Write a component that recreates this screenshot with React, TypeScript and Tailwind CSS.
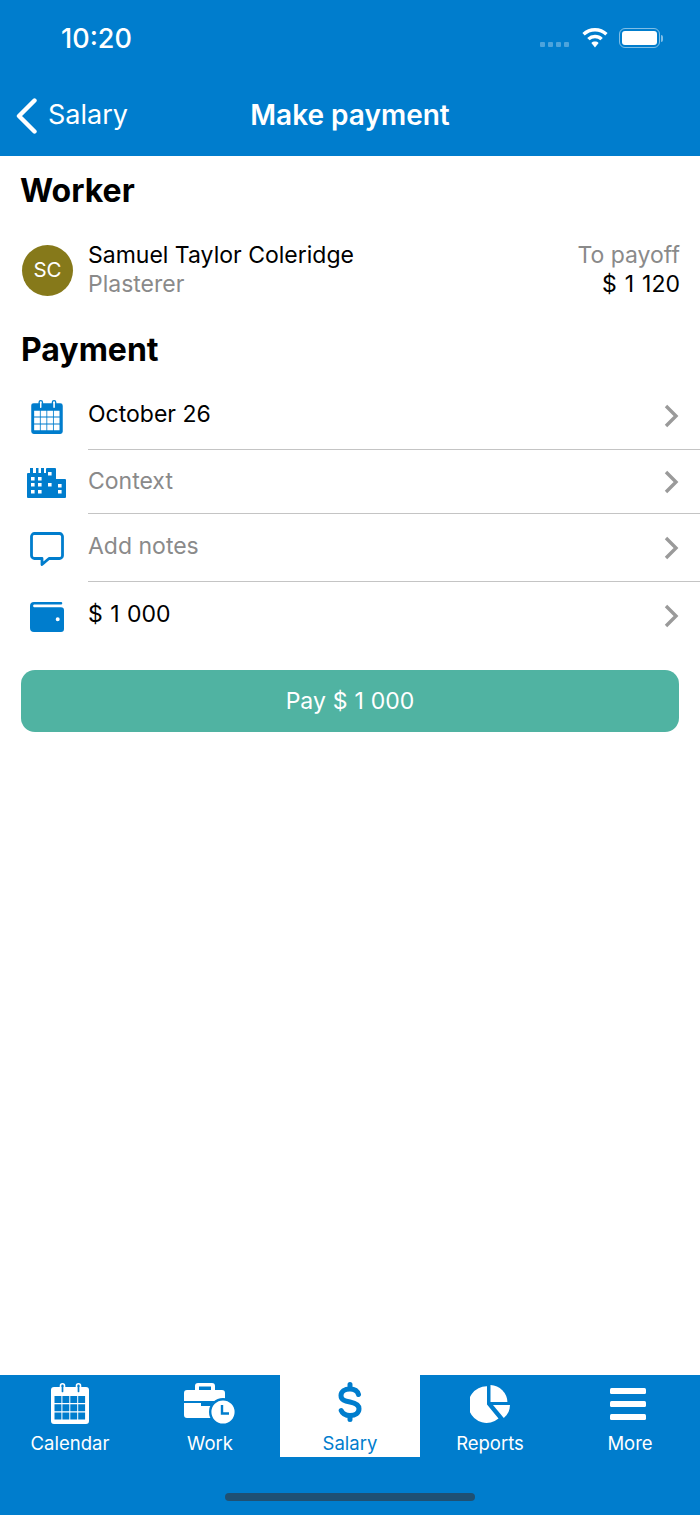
const BLUE = "#007dcd";

function CalendarIcon({ className }: { className?: string }) {
    // cut-outs are drawn with evenodd so the background shows through the grid
    const cells: string[] = [];
    for (let r = 0; r < 3; r++) {
        for (let c = 0; c < 4; c++) {
            cells.push(`M${3.5 + c * 7.9} ${13 + r * 8.2}h6.9v7h-6.9z`);
        }
    }
    return (
        <svg viewBox="0 0 38 41" className={className} fill="currentColor">
            <path
                fillRule="evenodd"
                d={`M3 4h32a3 3 0 0 1 3 3v31a3 3 0 0 1-3 3H3a3 3 0 0 1-3-3V7a3 3 0 0 1 3-3z M10.500 4h2v5.500h-2z M26.500 4h2v5.500h-2z ${cells.join(" ")}`}
            />
            <rect x="9.500" y="0.800" width="4" height="9.500" rx="2" fill="none" stroke="currentColor" strokeWidth="1.600" />
            <rect x="25.500" y="0.800" width="4" height="9.500" rx="2" fill="none" stroke="currentColor" strokeWidth="1.600" />
        </svg>
    );
}

function BuildingsIcon({ className }: { className?: string }) {
    const holes = [
        [4, 9], [11, 9], [4, 15], [11, 15], [4, 22], [11, 22], [21, 4], [21, 15], [31, 16], [31, 22],
    ];
    return (
        <svg viewBox="0 0 39 30" className={className} fill="currentColor">
            <path
                fillRule="evenodd"
                d={`M1 5h2V0h3v5h3V0h2.500v5H14V0h3v5h2V1a1 1 0 0 1 1-1h8a1 1 0 0 1 1 1v10h9a1 1 0 0 1 1 1v17a1 1 0 0 1-1 1H1a1 1 0 0 1-1-1V6a1 1 0 0 1 1-1z ${holes
                    .map(([x, y]) => `M${x} ${y}h3.600v3.600h-3.600z`)
                    .join(" ")}`}
            />
        </svg>
    );
}

function CommentIcon({ className }: { className?: string }) {
    return (
        <svg viewBox="0 0 34 35" className={className} fill="none" stroke="currentColor" strokeWidth="2.800" strokeLinejoin="round">
            <path d="M4.500 1.500h25a3 3 0 0 1 3 3v19a3 3 0 0 1-3 3H19l-7 6v-6H4.500a3 3 0 0 1-3-3v-19a3 3 0 0 1 3-3z" />
        </svg>
    );
}

function WalletIcon({ className }: { className?: string }) {
    return (
        <svg viewBox="0 0 34 30" className={className} fill="currentColor">
            <path
                fillRule="evenodd"
                d="M4 0h27a1.300 1.300 0 0 1 0 2.600H4A1.400 1.400 0 0 0 4 5.200h27a3 3 0 0 1 3 3V27a3 3 0 0 1-3 3H4a4 4 0 0 1-4-4V4a4 4 0 0 1 4-4zM27.700 15.200a2 2 0 1 0 0 4 2 2 0 0 0 0-4z"
            />
        </svg>
    );
}

function BriefcaseClockIcon({ className }: { className?: string }) {
    return (
        <svg viewBox="0 0 52 41" className={className} fill="currentColor">
            <path
                fillRule="evenodd"
                d="M11 7V3a3 3 0 0 1 3-3h14a3 3 0 0 1 3 3v4h7a3 3 0 0 1 3 3v8H0v-8a3 3 0 0 1 3-3zM15 3.500V7h12V3.500z"
            />
            <path d="M0 20h17v3h11v-3h13v15H3a3 3 0 0 1-3-3z" />
            <circle cx="39" cy="29" r="12.800" stroke={BLUE} strokeWidth="2.400" />
            <path d="M38 22v8.500h7" fill="none" stroke={BLUE} strokeWidth="2.400" />
        </svg>
    );
}

function DollarIcon({ className }: { className?: string }) {
    return (
        <svg viewBox="0 0 24 40" className={className} fill="none" stroke="currentColor" strokeWidth="5" strokeLinecap="round">
            <path d="M12 2.500v4M12 33.500v4" />
            <path d="M20.500 12.500C19.500 9 16.500 7 12 7 6.500 7 3 9.800 3 13.500 3 18 7 19 12 20c5 1 9 2.300 9 6.800 0 4-3.500 6.700-9 6.700-4.500 0-7.500-1.800-8.800-5" />
        </svg>
    );
}

function PieIcon({ className }: { className?: string }) {
    return (
        <svg viewBox="0 0 40 38" className={className} fill="currentColor">
            <path d="M17 1.300V19.500l11.500 14A18.300 18.300 0 1 1 17 1.300z" />
            <path d="M20.500 0A17.500 17.500 0 0 1 37.400 17H20.500z" />
            <path d="M23 20h17a17 17 0 0 1-6.200 13z" />
        </svg>
    );
}

function MenuIcon({ className }: { className?: string }) {
    return (
        <svg viewBox="0 0 36 32" className={className} fill="currentColor">
            <rect x="0" y="0" width="36" height="6" rx="1.500" />
            <rect x="0" y="13" width="36" height="6" rx="1.500" />
            <rect x="0" y="26" width="36" height="6" rx="1.500" />
        </svg>
    );
}

function Chevron() {
    return (
        <svg viewBox="0 0 16 24" className="w-4 h-6 text-[#9a9a9a]" fill="none" stroke="currentColor" strokeWidth="3.400">
            <path d="M3 2l10 10-10 10" />
        </svg>
    );
}

function StatusBar() {
    return (
        <div className="h-[76px] flex items-center justify-between pl-[61px] pr-[37px]">
            <span className="text-[27px] font-medium text-white mt-[3px]">10:20</span>
            <div className="flex items-center">
                <div className="flex gap-[3px] mt-[13px] mr-[13px]">
                    <span className="w-[5px] h-[5px] rounded-[1px] bg-white/30" />
                    <span className="w-[5px] h-[5px] rounded-[1px] bg-white/30" />
                    <span className="w-[5px] h-[5px] rounded-[1px] bg-white/30" />
                    <span className="w-[5px] h-[5px] rounded-[1px] bg-white/30" />
                </div>
                <svg viewBox="0 0 26 20" className="w-[26px] h-[20px] text-white mr-[11px]" fill="currentColor">
                    <path d="M13 0c4.900 0 9.300 1.900 12.600 5.100l-2.300 2.400A14.800 14.800 0 0 0 13 3.400c-4 0-7.600 1.600-10.300 4.100L.4 5.100A18 18 0 0 1 13 0z" />
                    <path d="M13 6.800c3 0 5.700 1.200 7.800 3.100l-2.400 2.400A8 8 0 0 0 13 10.200a8 8 0 0 0-5.400 2.100L5.200 9.900A11.400 11.400 0 0 1 13 6.800z" />
                    <path d="M13 13.600c1.400 0 2.700.5 3.600 1.400L13 19.400 9.400 15c.9-.9 2.200-1.400 3.600-1.400z" />
                </svg>
                <div className="w-[41px] h-[20px] rounded-[6px] border-[1.5px] border-white/50 p-[2px]">
                    <div className="w-full h-full rounded-[3px] bg-white" />
                </div>
                <div className="w-[2px] h-[7px] rounded-r-[2px] bg-white/50 ml-[1px]" />
            </div>
        </div>
    );
}

function NavBar() {
    return (
        <div className="relative h-[80px] flex items-center justify-center">
            <div className="absolute left-[16px] top-[21px] flex items-center">
                <svg viewBox="0 0 22 36" className="w-[22px] h-[36px] text-white" fill="none" stroke="currentColor" strokeWidth="4.400" strokeLinecap="round" strokeLinejoin="round">
                    <path d="M18.500 2.500L3 18l15.500 15.500" />
                </svg>
                <span className="ml-[10px] text-[27px] text-white -mt-[2px]">Salary</span>
            </div>
            <span className="text-[28px] font-semibold text-white -mt-[3px]">Make payment</span>
        </div>
    );
}

const rows = [
    { label: "October 26", muted: false, h: "h-[68px]", text: "-mt-[2px]", icon: <CalendarIcon className="w-[32px] h-[34px] mt-[2px]" />, iconBox: "pl-[31px]" },
    { label: "Context", muted: true, h: "h-[64px]", text: "", icon: <BuildingsIcon className="w-[39px] h-[30px] mt-[2px]" />, iconBox: "pl-[27px]" },
    { label: "Add notes", muted: true, h: "h-[68px]", text: "-mt-[2px]", icon: <CommentIcon className="w-[34px] h-[35px] mt-[2px]" />, iconBox: "pl-[30px]" },
    { label: "$ 1 000", muted: false, h: "h-[68px]", text: "-mt-[4px] [word-spacing:1px]", icon: <WalletIcon className="w-[34px] h-[30px] mt-[2px]" />, iconBox: "pl-[30px]" },
];

function PaymentRows() {
    return (
        <div>
            {rows.map((row, i) => (
                <div key={row.label} className={`flex ${row.h}`}>
                    <div className={`w-[88px] shrink-0 flex items-center text-[#007dcd] ${row.iconBox}`}>{row.icon}</div>
                    <div className={`flex-1 flex items-center justify-between pr-[21px] ${i < rows.length - 1 ? "border-b border-[#c4c4c4]" : ""}`}>
                        <span className={`text-[23px] ${row.text} ${row.muted ? "text-[#8a8a8a]" : "text-black"}`}>{row.label}</span>
                        <Chevron />
                    </div>
                </div>
            ))}
        </div>
    );
}

function TabBar() {
    const tabs = [
        { label: "Calendar", icon: <CalendarIcon className="w-[38px] h-[41px]" /> },
        { label: "Work", icon: <BriefcaseClockIcon className="w-[52px] h-[41px]" /> },
        { label: "Salary", icon: <DollarIcon className="w-[24px] h-[40px] -mt-[3px]" />, active: true },
        { label: "Reports", icon: <PieIcon className="w-[40px] h-[38px]" /> },
        { label: "More", icon: <MenuIcon className="w-[36px] h-[32px] -ml-[4px]" /> },
    ];
    return (
        <footer className="relative h-[140px] shrink-0" style={{ backgroundColor: BLUE }}>
            <div className="grid grid-cols-5 h-[82px]">
                {tabs.map((tab) => (
                    <div
                        key={tab.label}
                        className={`flex flex-col items-center ${tab.active ? "bg-white text-[#007dcd]" : "text-white"}`}
                    >
                        <div className="h-[57px] flex items-center justify-center">{tab.icon}</div>
                        <span className="text-[18.5px] leading-[22px]">{tab.label}</span>
                    </div>
                ))}
            </div>
            <div className="absolute left-[225px] bottom-[14px] w-[250px] h-[8px] rounded-full bg-[#1f5073]" />
        </footer>
    );
}

export default function App() {
    return (
        <div className="w-[700px] h-[1515px] flex flex-col bg-white font-['Inter',sans-serif] overflow-hidden">
            <header className="h-[156px] shrink-0" style={{ backgroundColor: BLUE }}>
                <StatusBar />
                <NavBar />
            </header>

            <main className="flex-1">
                <h2 className="pl-[20px] pt-[15px] text-[32px] leading-[40px] font-bold text-black">Worker</h2>

                <div className="flex items-center justify-between pl-[22px] pr-[20px] mt-[27px] h-[64px]">
                    <div className="flex items-center">
                        <div className="w-[51px] h-[51px] rounded-full bg-[#86791a] flex items-center justify-center text-[20.5px] text-white">
                            SC
                        </div>
                        <div className="ml-[15px] text-[23px] leading-[29px]">
                            <div className="text-black">Samuel Taylor Coleridge</div>
                            <div className="text-[#8a8a8a]">Plasterer</div>
                        </div>
                    </div>
                    <div className="text-right text-[23px] leading-[29px]">
                        <div className="text-[#8a8a8a]">To payoff</div>
                        <div className="text-black [word-spacing:1.5px]">$ 1 120</div>
                    </div>
                </div>

                <h2 className="pl-[21px] mt-[28px] text-[32px] leading-[40px] font-bold text-black">Payment</h2>

                <div className="mt-[12px]">
                    <PaymentRows />
                </div>

                <div className="px-[21px] mt-[20px]">
                    <button className="w-full h-[62px] rounded-[14px] bg-[#50b3a2] text-[23px] text-white [word-spacing:0.5px]">Pay $ 1 000</button>
                </div>
            </main>

            <TabBar />
        </div>
    );
}
